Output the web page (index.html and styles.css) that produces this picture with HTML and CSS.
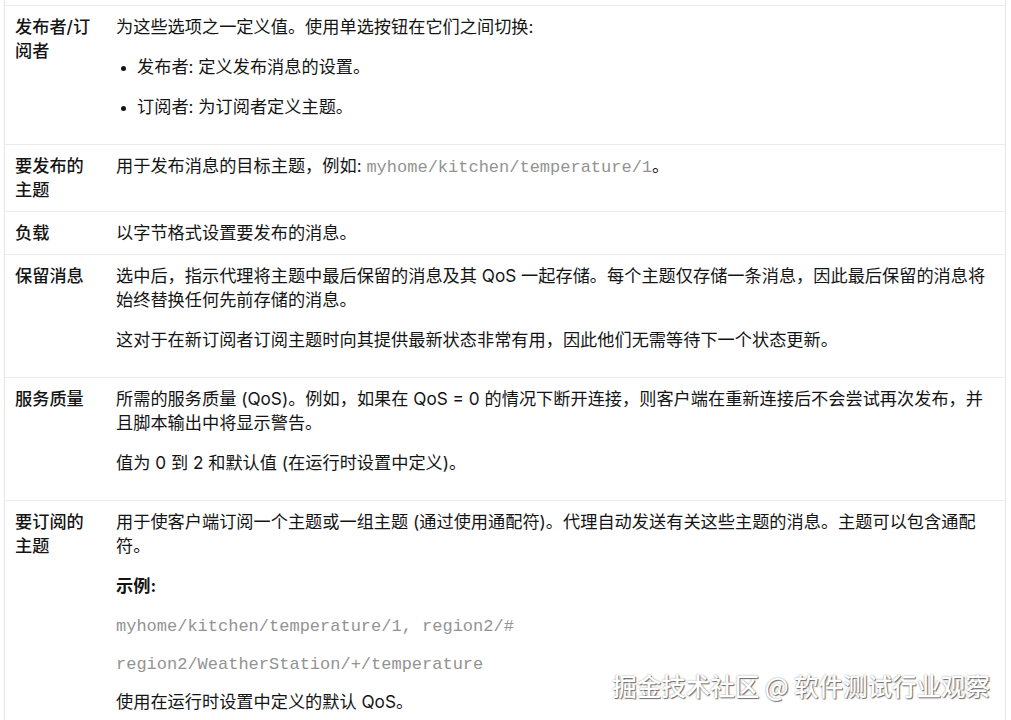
FILE: index.html
```html
<!DOCTYPE html>
<html lang="zh-CN">
<head>
    <meta charset="UTF-8">
    <meta name="viewport" content="width=device-width, initial-scale=1.0">
    <title>MQTT 客户端设置</title>
    <link rel="stylesheet" href="styles.css">
</head>
<body>
    <div class="doc">
        <table class="settings">
            <tr>
                <th>发布者/订阅者</th>
                <td>
                    <p>为这些选项之一定义值。使用单选按钮在它们之间切换:</p>
                    <ul>
                        <li><p>发布者: 定义发布消息的设置。</p></li>
                        <li><p>订阅者: 为订阅者定义主题。</p></li>
                    </ul>
                </td>
            </tr>
            <tr>
                <th>要发布的主题</th>
                <td>用于发布消息的目标主题，例如: <code>myhome/kitchen/temperature/1</code>。</td>
            </tr>
            <tr>
                <th>负载</th>
                <td>以字节格式设置要发布的消息。</td>
            </tr>
            <tr>
                <th>保留消息</th>
                <td>
                    <p>选中后，指示代理将主题中最后保留的消息及其 QoS 一起存储。每个主题仅存储一条消息，因此最后保留的消息将始终替换任何先前存储的消息。</p>
                    <p>这对于在新订阅者订阅主题时向其提供最新状态非常有用，因此他们无需等待下一个状态更新。</p>
                </td>
            </tr>
            <tr>
                <th>服务质量</th>
                <td>
                    <p>所需的服务质量 (QoS)。例如，如果在 QoS = 0 的情况下断开连接，则客户端在重新连接后不会尝试再次发布，并且脚本输出中将显示警告。</p>
                    <p>值为 0 到 2 和默认值 (在运行时设置中定义)。</p>
                </td>
            </tr>
            <tr>
                <th>要订阅的主题</th>
                <td>
                    <p>用于使客户端订阅一个主题或一组主题 (通过使用通配符)。代理自动发送有关这些主题的消息。主题可以包含通配符。</p>
                    <p><strong>示例:</strong></p>
                    <p class="code-line"><code>myhome/kitchen/temperature/1, region2/#</code></p>
                    <p class="code-line"><code>region2/WeatherStation/+/temperature</code></p>
                    <p>使用在运行时设置中定义的默认 QoS。</p>
                </td>
            </tr>
        </table>
    </div>

    <div class="watermark">掘金技术社区 @ 软件测试行业观察</div>
</body>
</html>
```

FILE: styles.css
```css
body {
    margin: 0;
    background-color: #ffffff;
    color: #141414;
    font-family: Inter, "Noto Sans CJK SC", sans-serif;
    font-size: 17.2px;
    line-height: 24px;
    overflow: hidden;
}
.doc {
    margin: 0 5px 0 4px;
    padding-top: 5px;
    border-left: 1px solid #e6e6e6;
    border-right: 1px solid #e6e6e6;
}
.settings {
    width: 100%;
    border-collapse: collapse;
}
.settings tr {
    border-top: 1px solid #ebebeb;
}
.settings th,
.settings td {
    vertical-align: top;
    text-align: left;
    padding: 9px 10px;
}
.settings th {
    width: 81px;
    font-weight: 500;
}
.settings td {
    font-weight: 400;
}
.settings p {
    margin: 0 0 16px;
}
.settings p.code-line {
    height: 22px;
    line-height: 22px;
}
.settings ul {
    margin: 0;
    padding-left: 21px;
}
.settings li::marker {
    font-size: 14px;
}
strong {
    font-weight: 700;
}
code {
    font-family: "Liberation Mono", "Courier New", monospace;
    font-size: 17px;
    line-height: 1;
    font-weight: 400;
    color: #939393;
}
.watermark {
    position: absolute;
    right: 21px;
    top: 670px;
    font-family: "Noto Sans CJK SC", sans-serif;
    font-size: 24.5px;
    line-height: 32px;
    color: #ffffff;
    font-weight: 500;
    text-shadow: 1px 1px 1px #6e6e6e, 0 0 2px #9a9a9a;
}
```
